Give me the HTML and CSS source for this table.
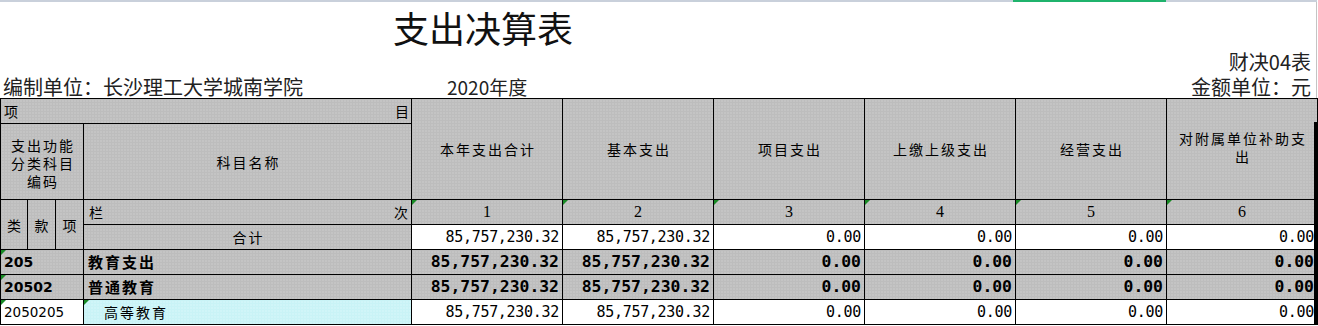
FILE: index.html
```html
<!DOCTYPE html>
<html lang="zh-CN">
<head>
<meta charset="utf-8">
<title>支出决算表</title>
<link rel="stylesheet" href="styles.css">
</head>
<body>
<div class="sheet">
  <div class="topbar"><span class="sel"></span></div>
  <header class="head">
    <h1 class="title">支出决算表</h1>
    <div class="code">财决04表</div>
    <div class="info">
      <span class="unit">编制单位：长沙理工大学城南学院</span>
      <span class="year">2020年度</span>
      <span class="money">金额单位：元</span>
    </div>
  </header>
  <div class="tablewrap">
    <table class="grid">
      <colgroup>
        <col class="c-a"><col class="c-b"><col class="c-b"><col class="c-name">
        <col class="c-n"><col class="c-n"><col class="c-n"><col class="c-n"><col class="c-n"><col class="c-n">
      </colgroup>
      <tr class="r1">
        <td colspan="4" class="g"><div class="split"><span>项</span><span>目</span></div></td>
        <td rowspan="2" class="g hd">本年支出合计</td>
        <td rowspan="2" class="g hd">基本支出</td>
        <td rowspan="2" class="g hd">项目支出</td>
        <td rowspan="2" class="g hd">上缴上级支出</td>
        <td rowspan="2" class="g hd">经营支出</td>
        <td rowspan="2" class="g hd hd-top"><span class="ln">对附属单位补助支</span><span class="ln">出</span></td>
      </tr>
      <tr class="r2">
        <td colspan="3" class="g hd ml"><span class="ln">支出功能</span><span class="ln">分类科目</span><span class="ln">编码</span></td>
        <td class="g hd">科目名称</td>
      </tr>
      <tr class="r3">
        <td rowspan="2" class="g hd">类</td>
        <td rowspan="2" class="g hd">款</td>
        <td rowspan="2" class="g hd">项</td>
        <td class="g"><div class="split lanci"><span>栏</span><span>次</span></div></td>
        <td class="g idx flag">1</td>
        <td class="g idx flag">2</td>
        <td class="g idx flag">3</td>
        <td class="g idx flag">4</td>
        <td class="g idx flag">5</td>
        <td class="g idx flag">6</td>
      </tr>
      <tr class="r4">
        <td class="g hd">合计</td>
        <td class="num">85,757,230.32</td>
        <td class="num">85,757,230.32</td>
        <td class="num">0.00</td>
        <td class="num">0.00</td>
        <td class="num">0.00</td>
        <td class="num">0.00</td>
      </tr>
      <tr class="r5 bold">
        <td colspan="3" class="g cd flag">205</td>
        <td class="g nm">教育支出</td>
        <td class="g num">85,757,230.32</td>
        <td class="g num">85,757,230.32</td>
        <td class="g num">0.00</td>
        <td class="g num">0.00</td>
        <td class="g num">0.00</td>
        <td class="g num">0.00</td>
      </tr>
      <tr class="r6 bold">
        <td colspan="3" class="g cd flag">20502</td>
        <td class="g nm">普通教育</td>
        <td class="g num">85,757,230.32</td>
        <td class="g num">85,757,230.32</td>
        <td class="g num">0.00</td>
        <td class="g num">0.00</td>
        <td class="g num">0.00</td>
        <td class="g num">0.00</td>
      </tr>
      <tr class="r7">
        <td colspan="3" class="cd flag">2050205</td>
        <td class="cy nm sub flag">高等教育</td>
        <td class="num">85,757,230.32</td>
        <td class="num">85,757,230.32</td>
        <td class="num">0.00</td>
        <td class="num">0.00</td>
        <td class="num">0.00</td>
        <td class="num">0.00</td>
      </tr>
    </table>
  </div>
</div>
</body>
</html>
```
FILE: styles.css
```css
html, body {
  margin: 0;
  padding: 0;
  background: #ffffff;
}
body {
  font-family: "Noto Sans CJK SC", "Noto Sans", sans-serif;
  color: #111111;
}
.sheet {
  width: 1318px;
}
.topbar {
  display: flex;
  height: 2px;
  width: 1317px;
  background: #c9d0db;
}
.sel {
  display: block;
  margin-left: 1013px;
  width: 153px;
  height: 2px;
  background: #1fb36c;
}
.head {
  box-sizing: border-box;
  width: 1317px;
  height: 96px;
  border-right: 1px solid #c4c4c4;
  padding-bottom: 1px;
  display: flex;
  flex-direction: column;
}
.title {
  margin: 5px 0 0 0;
  padding-left: 393px;
  font-size: 36px;
  line-height: 40px;
  font-weight: 400;
  color: #111;
}
.code {
  margin-top: 5px;
  text-align: right;
  padding-right: 5px;
  font-size: 20px;
  line-height: 20px;
  color: #222;
}
.info {
  margin-top: 5px;
  display: grid;
  grid-template-columns: 444px 1fr auto;
  padding: 0 5px 0 3px;
  font-size: 20px;
  line-height: 20px;
  color: #222;
}
.year {
  font-size: 19px;
}
.tablewrap {
  position: relative;
  width: 1318px;
}
.tablewrap::after {
  content: "";
  position: absolute;
  right: 0;
  top: 24px;
  bottom: 0;
  width: 4px;
  background: #000;
}
.grid {
  border-collapse: collapse;
  table-layout: fixed;
  width: 1317px;
  font-size: 14px;
  letter-spacing: 2px;
  color: #000;
}
.c-a { width: 27px; }
.c-b { width: 28px; }
.c-name { width: 328px; }
.c-n { width: 151px; }
.grid td {
  border: 1px solid #000;
  padding: 0;
  line-height: 18px;
  position: relative;
  white-space: nowrap;
  overflow: hidden;
}
.r1 { height: 25px; }
.r2 { height: 76px; }
.r3, .r4, .r5, .r6, .r7 { height: 25px; }
.g {
  background-color: #bdbdbd;
  background-image: radial-gradient(circle, #dadada 0.7px, transparent 0.9px);
  background-size: 3px 3px;
}
.cy {
  background-color: #c9f3f6;
  background-image: radial-gradient(circle, #e6fbfc 0.7px, transparent 0.9px);
  background-size: 3px 3px;
}
.hd {
  text-align: center;
  vertical-align: middle;
  padding-left: 2px !important;
}
.ln {
  display: block;
}
.hd-top {
  line-height: 19px;
  padding-bottom: 4px !important;
}
.ml {
  line-height: 20px;
  padding-top: 2px !important;
}
.split {
  display: flex;
  justify-content: space-between;
  align-items: center;
  padding: 0 0 0 3px;
}
.lanci {
  padding: 0 1px 0 5px;
}
.idx {
  text-align: center;
  font-family: "Liberation Serif", serif;
  font-size: 16px;
  letter-spacing: 0;
}
.num {
  text-align: right;
  padding-right: 3px !important;
  font-family: "DejaVu Sans Mono", monospace;
  font-size: 15px;
  letter-spacing: -0.3px;
  background-color: #fff;
}
.num.g {
  background-color: #bdbdbd;
}
.bold .num {
  font-size: 16.4px;
  font-weight: 700;
  letter-spacing: 0;
}
.cd {
  padding-left: 3px !important;
  font-family: "DejaVu Sans", sans-serif;
  font-size: 13.5px;
  letter-spacing: 0;
}
.bold .cd {
  font-size: 14px;
  font-weight: 700;
}
.nm {
  padding-left: 4px !important;
}
.bold .nm {
  font-size: 15px;
  font-weight: 700;
}
.sub {
  padding-left: 20px !important;
}
.flag::before {
  content: "";
  position: absolute;
  top: 0;
  left: 0;
  border-top: 5px solid #188a25;
  border-right: 5px solid transparent;
}
```
